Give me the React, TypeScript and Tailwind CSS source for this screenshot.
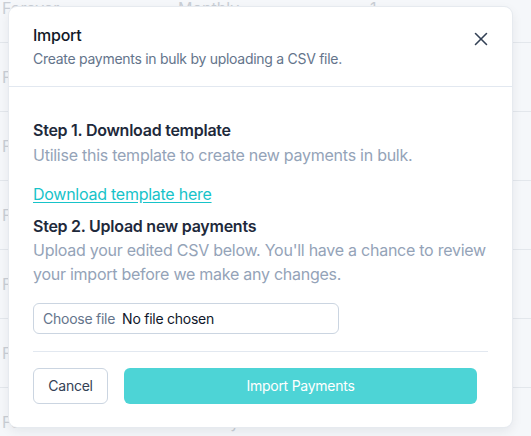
import { X } from "lucide-react";

const rows = [
  { plan: "Forever", period: "Monthly", qty: "1" },
  { plan: "Forever", period: "Monthly", qty: "1" },
  { plan: "Forever", period: "Monthly", qty: "1" },
  { plan: "Forever", period: "Monthly", qty: "1" },
  { plan: "Forever", period: "Monthly", qty: "1" },
  { plan: "Forever", period: "Monthly", qty: "1" },
  { plan: "Forever", period: "Monthly", qty: "1" },
];

function BackgroundTable() {
  return (
    <div className="-mt-[26px] -ml-[2px]">
      {rows.map((r, i) => (
        <div
          key={i}
          className="flex h-[69px] items-center border-b border-[#e3e7ec] text-base text-[#c9ced5]"
        >
          <span className="w-[180px] pl-1">{r.plan}</span>
          <span className="w-[192px]">{r.period}</span>
          <span>{r.qty}</span>
        </div>
      ))}
    </div>
  );
}

function ImportModal() {
  return (
    <div className="absolute left-[9px] top-[7px] w-[503px] rounded-lg bg-white tracking-[-0.016em] shadow-[0_4px_12px_rgba(15,23,42,0.08)] ring-1 ring-[#e6eaef]">
      <div className="flex items-start justify-between border-b border-[#e2e8f0] px-6 pt-4 pb-[17px]">
        <div>
          <h2 className="text-base leading-6 font-medium text-[#111827]">Import</h2>
          <p className="mt-0.5 text-sm leading-5 tracking-[-0.02em] text-[#64748b]">
            Create payments in bulk by uploading a CSV file.
          </p>
        </div>
        <button className="mt-[5px] -mr-[4px] text-[#334155]">
          <X size={22} strokeWidth={1.7} />
        </button>
      </div>

      <div className="px-6 pt-[31px] pb-[23px]">
        <h3 className="text-base leading-6 font-semibold text-[#1e293b]">Step 1. Download template</h3>
        <p className="mt-px text-base leading-6 text-[#94a3b8]">
          Utilise this template to create new payments in bulk.
        </p>
        <a href="#" className="mt-[15px] block text-base leading-6 text-[#17c3c9] underline underline-offset-2">
          Download template here
        </a>
        <h3 className="mt-2 text-base leading-6 font-semibold text-[#1e293b]">Step 2. Upload new payments</h3>
        <p className="text-base leading-6 text-[#94a3b8]">
          Upload your edited CSV below. You'll have a chance to review your import before we make any
          changes.
        </p>

        <label className="mt-[17px] flex h-[31px] w-[306px] items-center rounded-md border border-[#cbd5e1] px-[9px] text-sm">
          <span className="text-[#64748b]">Choose file</span>
          <span className="ml-[7px] text-[#0f172a]">No file chosen</span>
          <input type="file" className="hidden" />
        </label>

        <div className="mt-[17px] border-t border-[#e2e8f0]" />

        <div className="mt-4 flex gap-4">
          <button className="h-9 w-[75px] rounded-md border border-[#cbd5e1] bg-white text-sm text-[#334155]">
            Cancel
          </button>
          <button className="h-9 w-[353px] rounded-md bg-[#4dd4d6] text-sm text-white">
            Import Payments
          </button>
        </div>
      </div>
    </div>
  );
}

export default function App() {
  return (
    <div
      className="relative h-[436px] w-[531px] overflow-hidden bg-[#f5f7fa]"
      style={{ fontFamily: "Inter, 'Noto Sans', sans-serif" }}
    >
      <BackgroundTable />
      <ImportModal />
    </div>
  );
}
